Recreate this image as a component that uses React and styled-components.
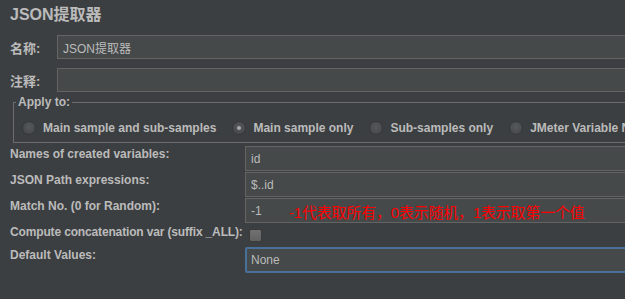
import React, { useState } from 'react';
import styled, { createGlobalStyle } from 'styled-components';

const GlobalStyle = createGlobalStyle`
  html, body {
    margin: 0;
    padding: 0;
    background: #3c3f41;
    overflow: hidden;
  }
`;

const Page = styled.div`
  width: 680px;
  height: 299px;
  padding: 5px 0 0 10px;
  box-sizing: border-box;
  background: #3c3f41;
  color: #bbbbbb;
  font-family: "Liberation Sans", Arial, "Noto Sans CJK SC", sans-serif;
`;

const Title = styled.div`
  font-size: 16px;
  font-weight: bold;
  line-height: 20px;
  margin-bottom: 10px;
`;

const TopRows = styled.div`
  display: flex;
  flex-direction: column;
  gap: 9px;
`;

const TopRow = styled.div`
  display: flex;
  align-items: center;
  height: 24px;
`;

const TopLabel = styled.label`
  width: 47px;
  flex: none;
  font-size: 13px;
  font-weight: bold;
  font-family: "Liberation Sans", "Noto Sans CJK SC", sans-serif;
`;

const TextInput = styled.input`
  flex: 1;
  min-width: 0;
  height: ${(p) => p.$h || 24}px;
  box-sizing: border-box;
  background: #45494a;
  border: ${(p) => (p.$focused ? '2px solid #47709a' : '1px solid #646464')};
  border-radius: ${(p) => (p.$focused ? '2px' : '0')};
  padding: 0 ${(p) => (p.$focused ? 4 : 5)}px;
  color: #bbbbbb;
  font-family: "Liberation Sans", Arial, "Noto Sans CJK SC", sans-serif;
  font-size: 12px;
  outline: none;
`;

const Fieldset = styled.fieldset`
  margin: 3px 0 0 3px;
  padding: 4px 0 0 2px;
  border: 1px solid #6c6c6c;
  border-right: none;
`;

const Legend = styled.legend`
  padding: 0 2px;
  font-size: 12px;
  font-weight: bold;
  line-height: 14px;
`;

const RadioRow = styled.div`
  display: flex;
  align-items: center;
  height: 29px;
  gap: 16px;
  padding-left: 6px;
  white-space: nowrap;
`;

const RadioItem = styled.label`
  display: flex;
  align-items: center;
  gap: 7px;
  font-size: 12px;
  font-weight: bold;
  cursor: pointer;
`;

const RadioDot = styled.span`
  width: 14px;
  height: 14px;
  flex: none;
  border-radius: 50%;
  box-sizing: border-box;
  border: 1px solid #353739;
  background: radial-gradient(circle at 50% 40%, #55595b 0%, #4a4d4f 60%, #424547 100%);
  display: flex;
  align-items: center;
  justify-content: center;
  &::after {
    content: '';
    width: 4px;
    height: 4px;
    border-radius: 50%;
    background: #a9a9a9;
    display: ${(p) => (p.$checked ? 'block' : 'none')};
  }
`;

const Grid = styled.div`
  display: grid;
  grid-template-columns: 235px 1fr;
  row-gap: 1px;
  margin-top: 3px;
`;

const FieldLabel = styled.label`
  font-size: 12px;
  font-weight: bold;
  line-height: 16px;
  white-space: nowrap;
  letter-spacing: ${(p) => (p.$tight ? '-0.15px' : '0')};
`;

const Field = styled.div`
  position: relative;
  display: flex;
  height: ${(p) => p.$h}px;
`;

const Annotation = styled.span`
  position: absolute;
  left: 44px;
  top: 50%;
  transform: translateY(-50%);
  color: #ff0000;
  font-size: 15px;
  letter-spacing: -0.2px;
  font-family: "Liberation Sans", "Noto Sans CJK SC", sans-serif;
  white-space: nowrap;
  pointer-events: none;
`;

const CheckBox = styled.span`
  width: 13px;
  height: 13px;
  margin: 5px 0 0 4px;
  box-sizing: border-box;
  border: 1px solid #3a3a3a;
  border-radius: 2px;
  background: linear-gradient(#717171, #626262);
`;

const options = [
  'Main sample and sub-samples',
  'Main sample only',
  'Sub-samples only',
  'JMeter Variable Name to use',
];

export default function App() {
  const [scope, setScope] = useState(1);
  return (
    <Page>
      <GlobalStyle />
      <Title>JSON提取器</Title>
      <TopRows>
        <TopRow>
          <TopLabel>名称:</TopLabel>
          <TextInput defaultValue="JSON提取器" />
        </TopRow>
        <TopRow>
          <TopLabel>注释:</TopLabel>
          <TextInput defaultValue="" />
        </TopRow>
      </TopRows>
      <Fieldset>
        <Legend>Apply to:</Legend>
        <RadioRow>
          {options.map((o, i) => (
            <RadioItem key={o} onClick={() => setScope(i)}>
              <RadioDot $checked={scope === i} />
              {o}
            </RadioItem>
          ))}
        </RadioRow>
      </Fieldset>
      <Grid>
        <FieldLabel>Names of created variables:</FieldLabel>
        <Field $h={25}><TextInput $h={25} defaultValue="id" /></Field>
        <FieldLabel>JSON Path expressions:</FieldLabel>
        <Field $h={25}><TextInput $h={25} defaultValue="$..id" /></Field>
        <FieldLabel>Match No. (0 for Random):</FieldLabel>
        <Field $h={25}>
          <TextInput $h={25} defaultValue="-1" />
          <Annotation>-1代表取所有，0表示随机，1表示取第一个值</Annotation>
        </Field>
        <FieldLabel $tight>Compute concatenation var (suffix _ALL):</FieldLabel>
        <Field $h={22}><CheckBox /></Field>
        <FieldLabel>Default Values:</FieldLabel>
        <Field $h={26}><TextInput $h={26} $focused defaultValue="None" /></Field>
      </Grid>
    </Page>
  );
}
